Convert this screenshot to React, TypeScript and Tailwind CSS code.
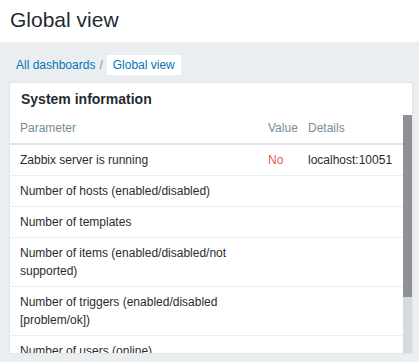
import React from 'react';

type Row = { param: string; value?: string; details?: string; valueRed?: boolean };

const rows: Row[] = [
  { param: 'Zabbix server is running', value: 'No', details: 'localhost:10051', valueRed: true },
  { param: 'Number of hosts (enabled/disabled)' },
  { param: 'Number of templates' },
  { param: 'Number of items (enabled/disabled/not supported)' },
  { param: 'Number of triggers (enabled/disabled [problem/ok])' },
  { param: 'Number of users (online)' },
];

const App: React.FC = () => {
  return (
    <div
      className="w-[419px] h-[362px] overflow-hidden bg-[#ebeef0] text-[#1f2c33]"
      style={{ fontFamily: '"Liberation Sans", Arial, sans-serif' }}
    >
      {/* Page header */}
      <div className="h-[42px] bg-white px-[10px] pt-[8px]">
        <h1 className="text-[21px] leading-[24px] font-normal">Global view</h1>
      </div>

      {/* Breadcrumbs */}
      <div className="flex items-center h-[20px] mt-[13px] mb-[7px] pl-[16px] text-[12px] leading-[20px]">
        <span className="text-[#0275b8]">All dashboards</span>
        <span className="mx-[4px] text-[#768d99]">/</span>
        <span className="bg-white px-[6px] text-[#0275b8]">Global view</span>
      </div>

      {/* Widget */}
      <div className="ml-[9px] w-[404px] h-[272px] bg-white border border-[#dfe4e7] overflow-hidden flex flex-col">
        <div className="h-[32px] shrink-0 flex items-center px-[11px]">
          <h4 className="text-[14px] font-bold leading-[16px]">System information</h4>
        </div>
        <div className="flex flex-1 min-h-0">
          <div className="flex-1 overflow-hidden">
            <table className="w-[393px] table-fixed border-collapse text-[12px] leading-[18px]">
              <colgroup>
                <col className="w-[253px]" />
                <col className="w-[40px]" />
                <col className="w-[100px]" />
              </colgroup>
              <thead>
                <tr className="border-b-2 border-[#dfe4e7] text-[#768d99]">
                  <th className="font-normal text-left pl-[10px] pr-[5px] pt-[4px] pb-[6px]">Parameter</th>
                  <th className="font-normal text-left pl-[5px] pt-[4px] pb-[6px]">Value</th>
                  <th className="font-normal text-left pl-[5px] pt-[4px] pb-[6px]">Details</th>
                </tr>
              </thead>
              <tbody>
                {rows.map((r) => (
                  <tr key={r.param} className="border-b border-[#ebeef0] align-top">
                    <td className="pl-[10px] pr-[5px] py-[6px]">{r.param}</td>
                    <td className={`pl-[5px] py-[6px] ${r.valueRed ? 'text-[#e45959]' : ''}`}>{r.value}</td>
                    <td className="pl-[5px] py-[6px] whitespace-nowrap">{r.details}</td>
                  </tr>
                ))}
              </tbody>
            </table>
          </div>
          {/* Scrollbar */}
          <div className="w-[9px] shrink-0 bg-[#d3dbdf]">
            <div className="h-[182px] bg-[#8f9194]" />
          </div>
        </div>
      </div>
    </div>
  );
};

export default App;
